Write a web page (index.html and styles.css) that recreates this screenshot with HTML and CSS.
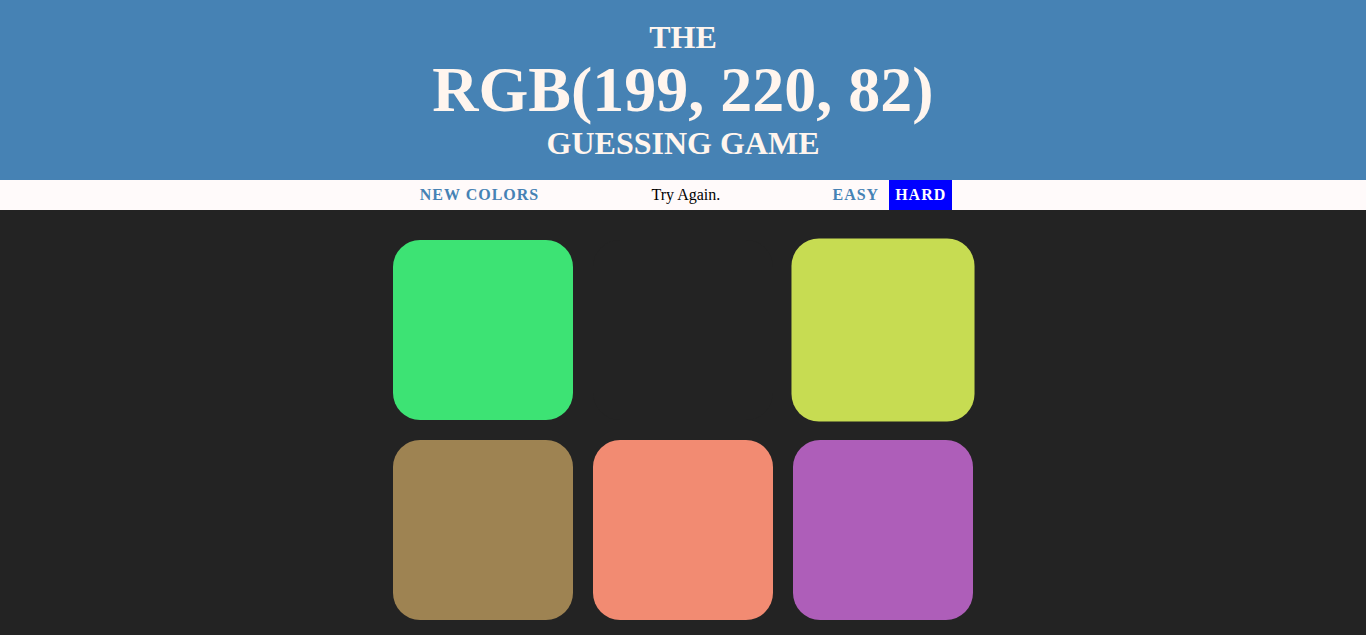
FILE: index.html
```html
<!DOCTYPE html>
<html>
<head>
<meta charset="utf-8">
<title>Color Game</title>
<link rel="stylesheet" href="styles.css">
</head>
<body>
<h1 class="title">
  <span class="title-line">The</span>
  <span class="title-line color-display">RGB(199, 220, 82)</span>
  <span class="title-line">Guessing Game</span>
</h1>
<div class="stripe">
  <button class="btn">New Colors</button>
  <span class="message">Try Again.</span>
  <button class="btn">Easy</button>
  <button class="btn selected">Hard</button>
</div>
<div class="container">
  <div class="square" style="background: rgb(61, 227, 116);"></div>
  <div class="square hidden"></div>
  <div class="square grow" style="background: rgb(199, 220, 82);"></div>
  <div class="square" style="background: rgb(158, 131, 82);"></div>
  <div class="square" style="background: rgb(242, 139, 114);"></div>
  <div class="square" style="background: rgb(174, 94, 185);"></div>
</div>
</body>
</html>
```
FILE: styles.css
```css
body {
  margin: 0;
  background: #232323;
  font-family: "Liberation Serif", "Times New Roman", serif;
}

.title {
  margin: 0;
  padding: 20px 0 19px;
  background: steelblue;
  color: #fff5ee;
  text-align: center;
  text-transform: uppercase;
  font-size: 32px;
  font-weight: bold;
  line-height: 1.1;
}

.title-line {
  display: block;
}

.color-display {
  font-size: 64px;
}

.stripe {
  height: 30px;
  background: #fffafa;
  text-align: center;
  font-size: 16px;
}

.btn {
  height: 100%;
  border: none;
  background: none;
  color: steelblue;
  font-family: inherit;
  font-size: inherit;
  font-weight: 700;
  letter-spacing: 1px;
  text-transform: uppercase;
  padding: 0 6px;
  margin: 0;
  outline: none;
  vertical-align: top;
}

.btn.selected {
  background: #0000ff;
  color: #fff;
}

.message {
  display: inline-block;
  width: 20%;
  line-height: 30px;
  color: #000;
  vertical-align: top;
}

.container {
  max-width: 600px;
  margin: 20px auto;
}

.container::after {
  content: "";
  display: block;
  clear: both;
}

.square {
  float: left;
  width: 30%;
  padding-bottom: 30%;
  margin: 1.66%;
  border-radius: 15%;
}

.square.hidden {
  background: #232323;
}

.square.grow {
  transform: scale(1.017);
}
```
